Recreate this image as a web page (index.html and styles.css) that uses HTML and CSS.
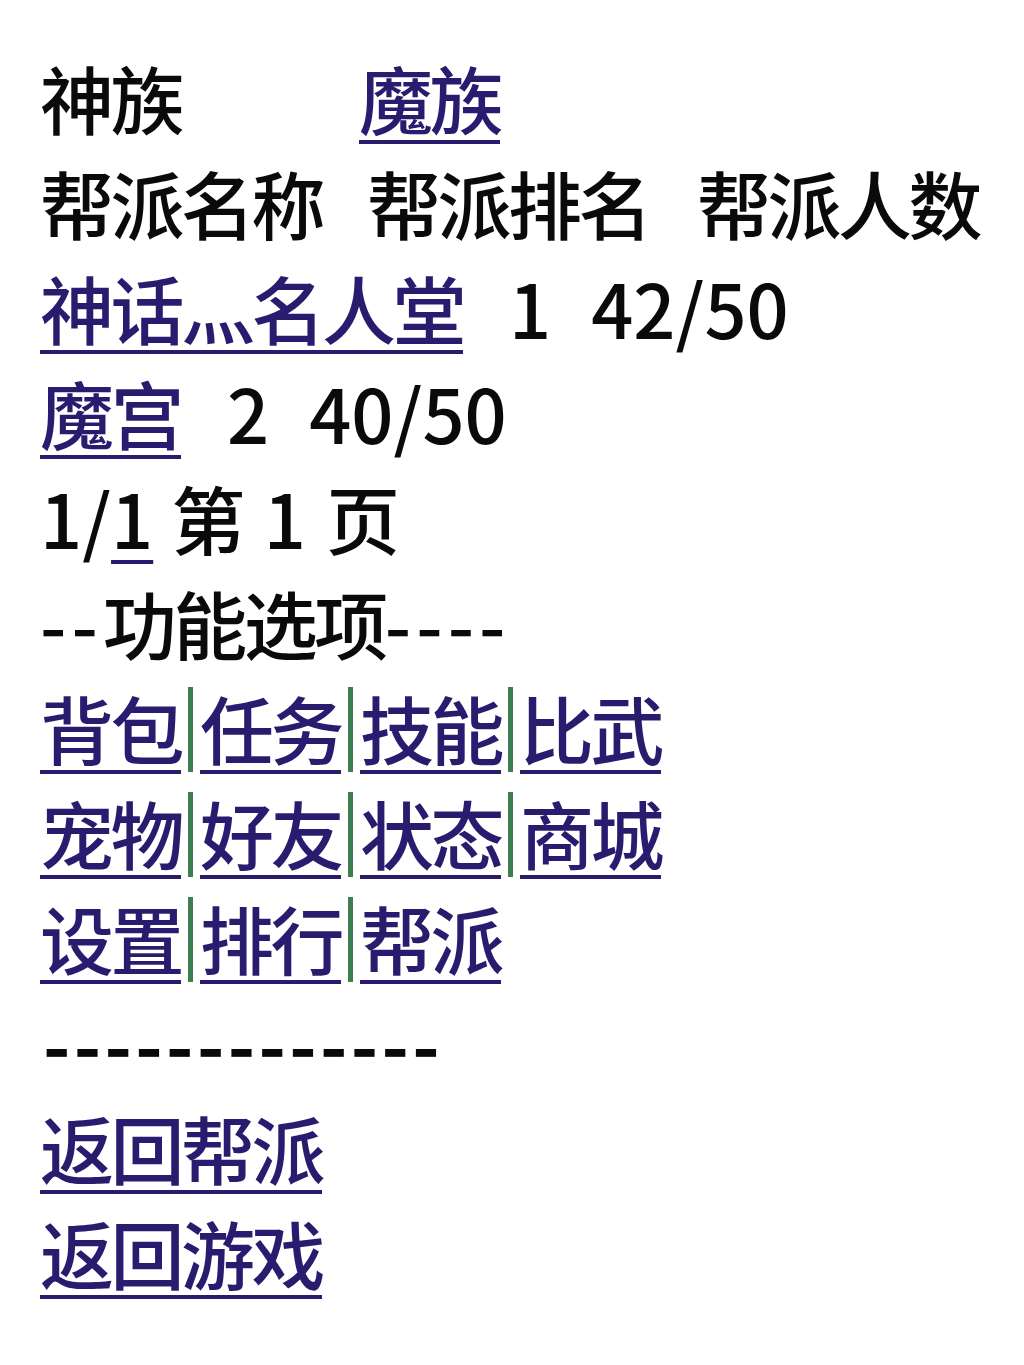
FILE: index.html
```html
<!DOCTYPE html>
<html lang="zh-CN">
<head>
<meta charset="utf-8">
<title>帮派排行</title>
<link rel="stylesheet" href="styles.css">
</head>
<body>
<div class="page">
  <div class="line"><span>神族</span><a class="lnk gap-race" href="#">魔族</a></div>
  <div class="line"><span>帮派名称</span><span class="gap-h1">帮派排名</span><span class="gap-h2">帮派人数</span></div>
  <div class="line"><a class="lnk" href="#">神话灬名人堂</a><span class="num gap-n1">1</span><span class="num gap-n2">42/50</span></div>
  <div class="line"><a class="lnk" href="#">魔宫</a><span class="num gap-n1">2</span><span class="num gap-n2">40/50</span></div>
  <div class="line"><span class="num">1/<span class="cur">1</span></span><span class="pg1">第</span><span class="num pg2">1</span><span class="pg3">页</span></div>
  <div class="line"><span class="dash">--</span>功能选项<span class="dash">----</span></div>
  <div class="line menu"><a class="lnk" href="#">背包</a><span class="sep"></span><a class="lnk" href="#">任务</a><span class="sep"></span><a class="lnk" href="#">技能</a><span class="sep"></span><a class="lnk" href="#">比武</a></div>
  <div class="line menu"><a class="lnk" href="#">宠物</a><span class="sep"></span><a class="lnk" href="#">好友</a><span class="sep"></span><a class="lnk" href="#">状态</a><span class="sep"></span><a class="lnk" href="#">商城</a></div>
  <div class="line menu"><a class="lnk" href="#">设置</a><span class="sep"></span><a class="lnk" href="#">排行</a><span class="sep"></span><a class="lnk" href="#">帮派</a></div>
  <div class="line"><span class="bold-dash">-------------</span></div>
  <div class="line"><a class="lnk" href="#">返回帮派</a></div>
  <div class="line"><a class="lnk" href="#">返回游戏</a></div>
</div>
</body>
</html>
```
FILE: styles.css
```css
html, body {
  margin: 0;
  padding: 0;
  background: #ffffff;
}
.page {
  padding: 44px 0 0 40px;
  font-family: "Noto Sans CJK SC", "Noto Sans", sans-serif;
  font-size: 74px;
  font-weight: 500;
  letter-spacing: -3.5px;
  line-height: 105px;
  color: #0a0a0a;
}
.line {
  display: flex;
  align-items: center;
  height: 105px;
  white-space: pre;
}
.lnk {
  color: #2a1b6e;
  text-decoration: underline;
  text-decoration-thickness: 4px;
  text-underline-offset: 11px;
  text-decoration-color: #2a1b6e;
}
.num {
  font-size: 74px;
  letter-spacing: 0;
}
.gap-race { margin-left: 178px; }
.gap-h1 { margin-left: 45px; }
.gap-h2 { margin-left: 48px; }
.gap-n1 { margin-left: 46px; }
.gap-n2 { margin-left: 40px; }
.pg1 { margin-left: 18px; }
.pg2 { margin-left: 22px; }
.pg3 { margin-left: 20px; }
.cur {
  text-decoration: underline;
  text-decoration-thickness: 4px;
  text-underline-offset: 11px;
  text-decoration-color: #2a1b6e;
}
.dash {
  letter-spacing: 5px;
}
.sep {
  display: inline-block;
  width: 5px;
  height: 85px;
  margin: 6px 7px 0;
  background: #3f7d52;
}
.bold-dash {
  font-weight: 700;
  letter-spacing: 3.4px;
  margin-left: 3px;
}
```
